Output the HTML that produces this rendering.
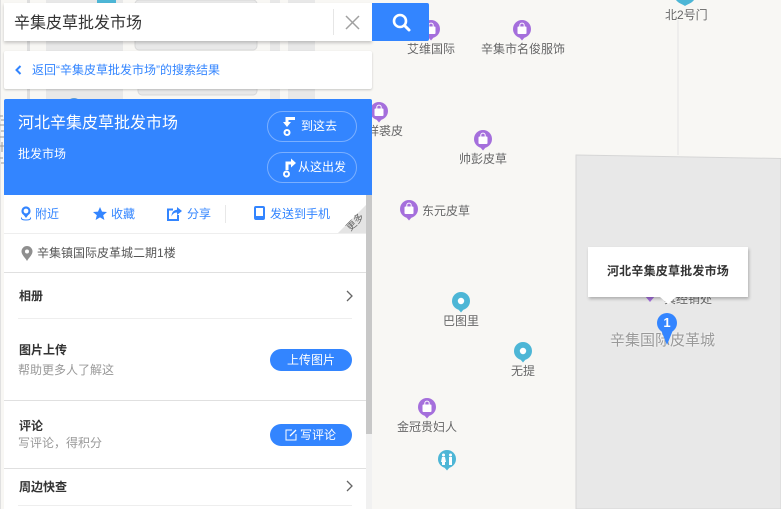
<!DOCTYPE html>
<html lang="zh">
<head>
<meta charset="utf-8">
<style>
html,body{margin:0;padding:0}
body{width:781px;height:509px;overflow:hidden;position:relative;background:#f8f7f4;font-family:"Liberation Sans","WenQuanYi Zen Hei","Noto Sans CJK SC",sans-serif;font-size:12px}
.a{position:absolute}
.t{position:absolute;white-space:nowrap;line-height:16px;height:16px}
.m{color:#666;text-shadow:0 0 2px #fff}
.b{color:#3385ff}
.w{color:#fff}
.h{font-weight:bold;color:#333}
.s{color:#999}
svg{position:absolute;overflow:visible}
</style>
</head>
<body>
<svg style="left:0;top:0" width="781" height="509" viewBox="0 0 781 509">
<defs>
<g id="bag"><circle r="9" fill="#a56fdc"/><path d="M-3 8H3L0 11.500Z" fill="#a56fdc"/><rect x="-4.500" y="-2.500" width="9" height="7.500" rx="1" fill="#fff"/><path d="M-2.200-2.500V-3.700A2.200 2.200 0 0 1 2.200-3.700V-2.500" fill="none" stroke="#fff"/></g>
<g id="dot"><circle r="9" fill="#4db6d6"/><path d="M-3 8H3L0 11.500Z" fill="#4db6d6"/><circle r="3.200" fill="#fff"/></g>
</defs>
<!-- map background fragments behind panel -->
<rect x="27" y="0" width="3" height="99" fill="#dedede"/>
<rect x="46" y="0" width="77" height="99" fill="#e8e8e8"/>
<rect x="135" y="0" width="122" height="50" rx="4" fill="#e8e8e8" stroke="#d8d8d8"/>
<rect x="138" y="80" width="119" height="15" rx="4" fill="#e8e8e8" stroke="#d8d8d8"/>
<rect x="270" y="0" width="10" height="99" fill="#e8e8e8"/>
<rect x="288" y="0" width="27" height="99" fill="#e8e8e8"/>
<circle cx="74" cy="106" r="8" fill="#5b9bd5"/>
<path d="M97 0h19v8l-9 4-10-4z" fill="#4db6d6"/>
<rect x="0" y="0" width="1" height="509" fill="#e0e0e0"/>
<path d="M0 116h3M1 120h3M0 125h4M1 131h3M0 137h4M2 142v10M0 146h4M0 158h3M1 163h3" stroke="#999" fill="none"/>
<!-- right building -->
<path d="M678 20V155" stroke="#e3e3e3" stroke-width="1" fill="none"/>
<path d="M576 155L781 158.500V509H576Z" fill="#e8e8e8" stroke="#d6d6d6"/>
<!-- pins -->
<use href="#bag" x="431" y="29"/>
<use href="#bag" x="522" y="29"/>
<use href="#bag" x="379" y="111"/>
<use href="#bag" x="483" y="139"/>
<use href="#bag" x="409" y="209"/>
<use href="#dot" x="461" y="301"/>
<use href="#dot" x="523" y="351"/>
<use href="#bag" x="427" y="407"/>
<circle cx="447" cy="459" r="9" fill="#4db6d6"/><path d="M444 467H450L447 470.500Z" fill="#4db6d6"/>
<g fill="#fff"><circle cx="443.500" cy="455" r="1.500"/><circle cx="450.500" cy="455" r="1.500"/><path d="M442 457h3l1 5h-1v3h-3v-3h-1z"/><path d="M449 457h3v8h-3z"/></g>
<path d="M676-8H694V0C692 3 688 4 685 6 682 4 678 3 676 0Z" fill="#4db6d6"/>
<path d="M650 302l-5-6 5-6 5 6z" fill="#a56fdc"/>
</svg>

<div class="t m" style="left:407px;top:41px">艾维国际</div>
<div class="t m" style="left:481px;top:41px">辛集市名俊服饰</div>
<div class="t m" style="left:367px;top:123px">祥裘皮</div>
<div class="t m" style="left:459px;top:151px">帅彭皮草</div>
<div class="t m" style="left:422px;top:203px">东元皮草</div>
<div class="t m" style="left:443px;top:313px">巴图里</div>
<div class="t m" style="left:511px;top:363px">无提</div>
<div class="t m" style="left:397px;top:419px">金冠贵妇人</div>
<div class="t m" style="left:665px;top:7px">北2号门</div>
<div class="t m" style="left:664px;top:291px">真经销处</div>
<div class="t" style="left:610px;top:333px;font-size:15px;color:#999;text-shadow:0 0 2px #fff">辛集国际皮革城</div>

<!-- popup -->
<div class="a" style="left:588px;top:247px;width:160px;height:50px;background:#fff;box-shadow:1px 2px 3px rgba(0,0,0,.25)"></div>
<svg style="left:660px;top:297px" width="16" height="8"><path d="M0 0H16L8 7Z" fill="#fff"/></svg>
<div class="t h" style="left:588px;width:160px;text-align:center;top:263px;letter-spacing:.2px">河北辛集皮草批发市场</div>
<svg style="left:656px;top:312px" width="22" height="34"><circle cx="11" cy="11" r="10" fill="#3385ff"/><path d="M5 18H17L11 33Z" fill="#3385ff"/></svg>
<div class="t w" style="left:656px;width:22px;text-align:center;top:315px;font-weight:bold;font-size:13px">1</div>

<!-- search box -->
<div class="a" style="left:4px;top:3px;width:368px;height:38px;background:#fff;box-shadow:0 2px 3px rgba(0,0,0,.2)"></div>
<div class="t" style="left:14px;top:15px;font-size:16px;color:#333;line-height:18px;height:18px">辛集皮草批发市场</div>
<div class="a" style="left:333px;top:9px;width:1px;height:26px;background:#e6e6e6"></div>
<svg style="left:345px;top:15px" width="15" height="15"><path d="M1 1L14 14M14 1L1 14" stroke="#a0a0a0" stroke-width="1.500" fill="none"/></svg>
<div class="a" style="left:372px;top:3px;width:57px;height:38px;background:#3385ff;border-radius:0 2px 2px 0"></div>
<svg style="left:392px;top:13px" width="19" height="19"><circle cx="8" cy="8" r="6" fill="none" stroke="#fff" stroke-width="2.600"/><path d="M12.500 12.500L17 17" stroke="#fff" stroke-width="3" stroke-linecap="round"/></svg>

<!-- back bar -->
<div class="a" style="left:4px;top:51px;width:368px;height:38px;background:#fff;border-radius:2px;box-shadow:0 1px 2px rgba(0,0,0,.2)"></div>
<svg style="left:15px;top:65px" width="7" height="10"><path d="M5.500 1L1.500 5L5.500 9" stroke="#3385ff" stroke-width="2" fill="none"/></svg>
<div class="t b" style="left:32px;top:62px">返回“辛集皮草批发市场”的搜索结果</div>

<!-- panel -->
<div class="a" style="left:4px;top:99px;width:362px;height:410px;background:#fff"></div>
<div class="a" style="left:4px;top:99px;width:368px;height:96px;background:#3385ff;border-radius:2px 2px 0 0"></div>
<div class="a" style="left:366px;top:195px;width:6px;height:239px;background:#c8c8c8"></div>
<div class="a" style="left:366px;top:434px;width:6px;height:75px;background:#f1f1f1"></div>

<div class="t w" style="left:18px;top:115px;font-size:16px;line-height:18px;height:18px">河北辛集皮草批发市场</div>
<div class="t w" style="left:18px;top:146px">批发市场</div>

<div class="a" style="left:267px;top:111px;width:88px;height:29px;border:1px solid rgba(255,255,255,.35);border-radius:16px"></div>
<div class="a" style="left:267px;top:152px;width:88px;height:29px;border:1px solid rgba(255,255,255,.35);border-radius:16px"></div>
<svg style="left:282px;top:116px" width="14" height="21"><path d="M13 2.500H5V7" stroke="#fff" stroke-width="3" fill="none"/><path d="M1 6H9L5 11Z" fill="#fff"/><circle cx="5" cy="16.500" r="2.500" fill="none" stroke="#fff" stroke-width="2"/></svg>
<svg style="left:282px;top:157px" width="15" height="21"><path d="M5 13V6H10" stroke="#fff" stroke-width="3" fill="none"/><path d="M9 1.500L14 6L9 10.500Z" fill="#fff"/><circle cx="4.500" cy="17" r="2.500" fill="none" stroke="#fff" stroke-width="2"/></svg>
<div class="t w" style="left:301px;top:118px">到这去</div>
<div class="t w" style="left:298px;top:159px">从这出发</div>

<!-- actions -->
<svg style="left:20px;top:206px" width="13" height="15"><circle cx="6" cy="5" r="3.500" fill="none" stroke="#3385ff" stroke-width="2.200"/><path d="M3 8L6 12L9 8Z" fill="#3385ff"/><path d="M1.500 11.500C1 13.500 3 14 6 14S11 13.500 10.500 11.500" fill="none" stroke="#3385ff"/></svg>
<div class="t b" style="left:35px;top:206px">附近</div>
<svg style="left:93px;top:207px" width="14" height="13"><path d="M7 0L9 4.600L14 5L10.200 8.200L11.400 13L7 10.400L2.600 13L3.800 8.200L0 5L5 4.600Z" fill="#3385ff"/></svg>
<div class="t b" style="left:111px;top:206px">收藏</div>
<svg style="left:167px;top:207px" width="15" height="14"><path d="M6 2.500H1V13H11V8" fill="none" stroke="#3385ff" stroke-width="2"/><path d="M10 0L15 4L10 8V5.500C7 5.500 5.500 7 4.500 9.500C4.500 5.500 6.500 3 10 2.700Z" fill="#3385ff"/></svg>
<div class="t b" style="left:187px;top:206px">分享</div>
<div class="a" style="left:225px;top:205px;width:1px;height:18px;background:#e8e8e8"></div>
<svg style="left:254px;top:206px" width="11" height="14"><rect x="1" y="1" width="9" height="12" rx="1" fill="none" stroke="#3385ff" stroke-width="2"/><rect x="1" y="10" width="9" height="3" fill="#3385ff"/></svg>
<div class="t b" style="left:270px;top:206px">发送到手机</div>
<svg style="left:337px;top:205px" width="29" height="29"><path d="M29 0V29H0Z" fill="#e4e4e4"/></svg>
<div class="t" style="left:346px;top:217px;font-size:10px;color:#666;transform:rotate(-45deg);line-height:12px;height:12px">更多</div>
<div class="a" style="left:4px;top:233px;width:362px;height:1px;background:#eee"></div>

<svg style="left:21px;top:246px" width="12" height="15"><path d="M6 15C4.500 12 .5 9 .5 5.500A5.500 5.500 0 1 1 11.500 5.500C11.500 9 7.500 12 6 15Z" fill="#8f8f8f"/><circle cx="6" cy="5.500" r="2" fill="#fff"/></svg>
<div class="t" style="left:37px;top:245px;color:#555">辛集镇国际皮革城二期<span style="color:#555">1</span>楼</div>
<div class="a" style="left:4px;top:272px;width:362px;height:1px;background:#e0e0e0"></div>

<div class="t h" style="left:19px;top:288px">相册</div>
<svg style="left:346px;top:290px" width="7" height="12"><path d="M1 1L6 6L1 11" stroke="#666" stroke-width="1.300" fill="none"/></svg>
<div class="a" style="left:18px;top:318px;width:334px;height:1px;background:#eee"></div>

<div class="t h" style="left:19px;top:342px">图片上传</div>
<div class="t s" style="left:18px;top:362px">帮助更多人了解这</div>
<div class="a" style="left:270px;top:349px;width:82px;height:22px;background:#3385ff;border-radius:11px"></div>
<div class="t w" style="left:287px;top:352px">上传图片</div>
<div class="a" style="left:4px;top:400px;width:362px;height:1px;background:#e0e0e0"></div>

<div class="t h" style="left:19px;top:418px">评论</div>
<div class="t s" style="left:18px;top:435px">写评论，得积分</div>
<div class="a" style="left:270px;top:424px;width:82px;height:22px;background:#3385ff;border-radius:11px"></div>
<svg style="left:285px;top:429px" width="12" height="12"><path d="M7 1H1V11H11V5" fill="none" stroke="#fff"/><path d="M5 7L11 1" stroke="#fff" stroke-width="1.300"/></svg>
<div class="t w" style="left:300px;top:427px">写评论</div>
<div class="a" style="left:4px;top:468px;width:362px;height:1px;background:#e0e0e0"></div>

<div class="t h" style="left:19px;top:479px">周边快查</div>
<svg style="left:346px;top:480px" width="7" height="12"><path d="M1 1L6 6L1 11" stroke="#666" stroke-width="1.300" fill="none"/></svg>
<div class="a" style="left:18px;top:505px;width:334px;height:1px;background:#eee"></div>
</body>
</html>
